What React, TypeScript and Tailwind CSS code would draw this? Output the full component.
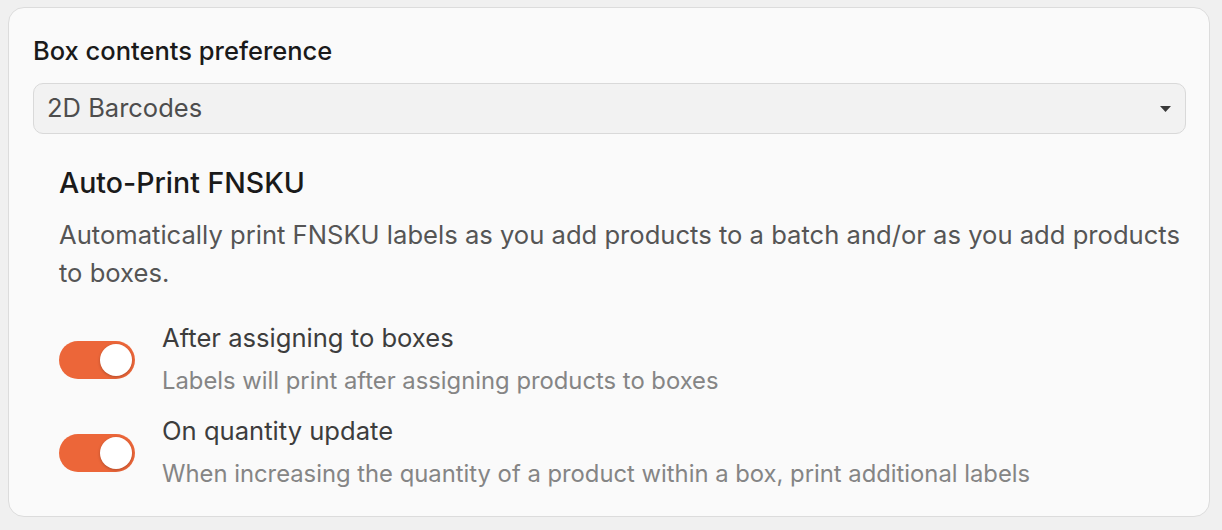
import { useState } from 'react';

function Toggle({ on, onChange }: { on: boolean; onChange: () => void }) {
  return (
    <button
      type="button"
      onClick={onChange}
      className={`relative flex h-[38px] w-[76px] shrink-0 items-center rounded-full px-[3px] transition-colors ${
        on ? 'bg-[#ec6639] justify-end' : 'bg-[#d4d4d4] justify-start'
      }`}
    >
      <span className="block h-[32px] w-[32px] rounded-full bg-white shadow-[0_1px_3px_rgba(0,0,0,0.25)]" />
    </button>
  );
}

export default function App() {
  const [afterBoxes, setAfterBoxes] = useState(true);
  const [onQty, setOnQty] = useState(true);

  const rows = [
    {
      title: 'After assigning to boxes',
      sub: 'Labels will print after assigning products to boxes',
      on: afterBoxes,
      toggle: () => setAfterBoxes((v) => !v),
    },
    {
      title: 'On quantity update',
      sub: 'When increasing the quantity of a product within a box, print additional labels',
      on: onQty,
      toggle: () => setOnQty((v) => !v),
    },
  ];

  return (
    <div className="min-h-[530px] bg-[#f0f0f0] pl-2 pr-3 pt-[7px] pb-3 font-['Inter','Noto_Sans',sans-serif]">
      <div className="rounded-2xl border border-[#dcdcdc] bg-[#fafafa] pl-[24px] pr-[23px] pt-[27px] pb-[27px]">
        <h3 className="text-[25.5px] font-medium leading-[32px] text-[#1a1a1a]">Box contents preference</h3>

        <div className="mt-[16px] flex h-[51px] items-center justify-between rounded-[10px] border border-[#d9d9d9] bg-[#f2f2f2] pl-[13px] pr-[14px]">
          <span className="text-[25.5px] text-[#4d4d4d]">2D Barcodes</span>
          <svg width="11" height="6" viewBox="0 0 11 6" className="fill-[#3a3a3a]">
            <path d="M0 0h11L5.5 6z" />
          </svg>
        </div>

        <div className="pl-[26px] pt-[31px]">
          <h4 className="text-[28.5px] font-medium leading-[36px] text-[#1a1a1a]">Auto-Print FNSKU</h4>
          <p className="mt-[15px] text-[25.6px] leading-[38px] text-[#555555]">
            Automatically print FNSKU labels as you add products to a batch and/or as you add products to boxes.
          </p>

          <div className="mt-[30px] flex flex-col gap-[19px]">
            {rows.map((r) => (
              <div key={r.title} className="flex items-start gap-[27px]">
                <div className="pt-[19px]">
                  <Toggle on={r.on} onChange={r.toggle} />
                </div>
                <div className="flex flex-col">
                  <span className="text-[25.6px] leading-[32px] text-[#3d3d3d]">{r.title}</span>
                  <span className="mt-[12px] text-[23.8px] leading-[30px] text-[#858585]">{r.sub}</span>
                </div>
              </div>
            ))}
          </div>
        </div>
      </div>
    </div>
  );
}
